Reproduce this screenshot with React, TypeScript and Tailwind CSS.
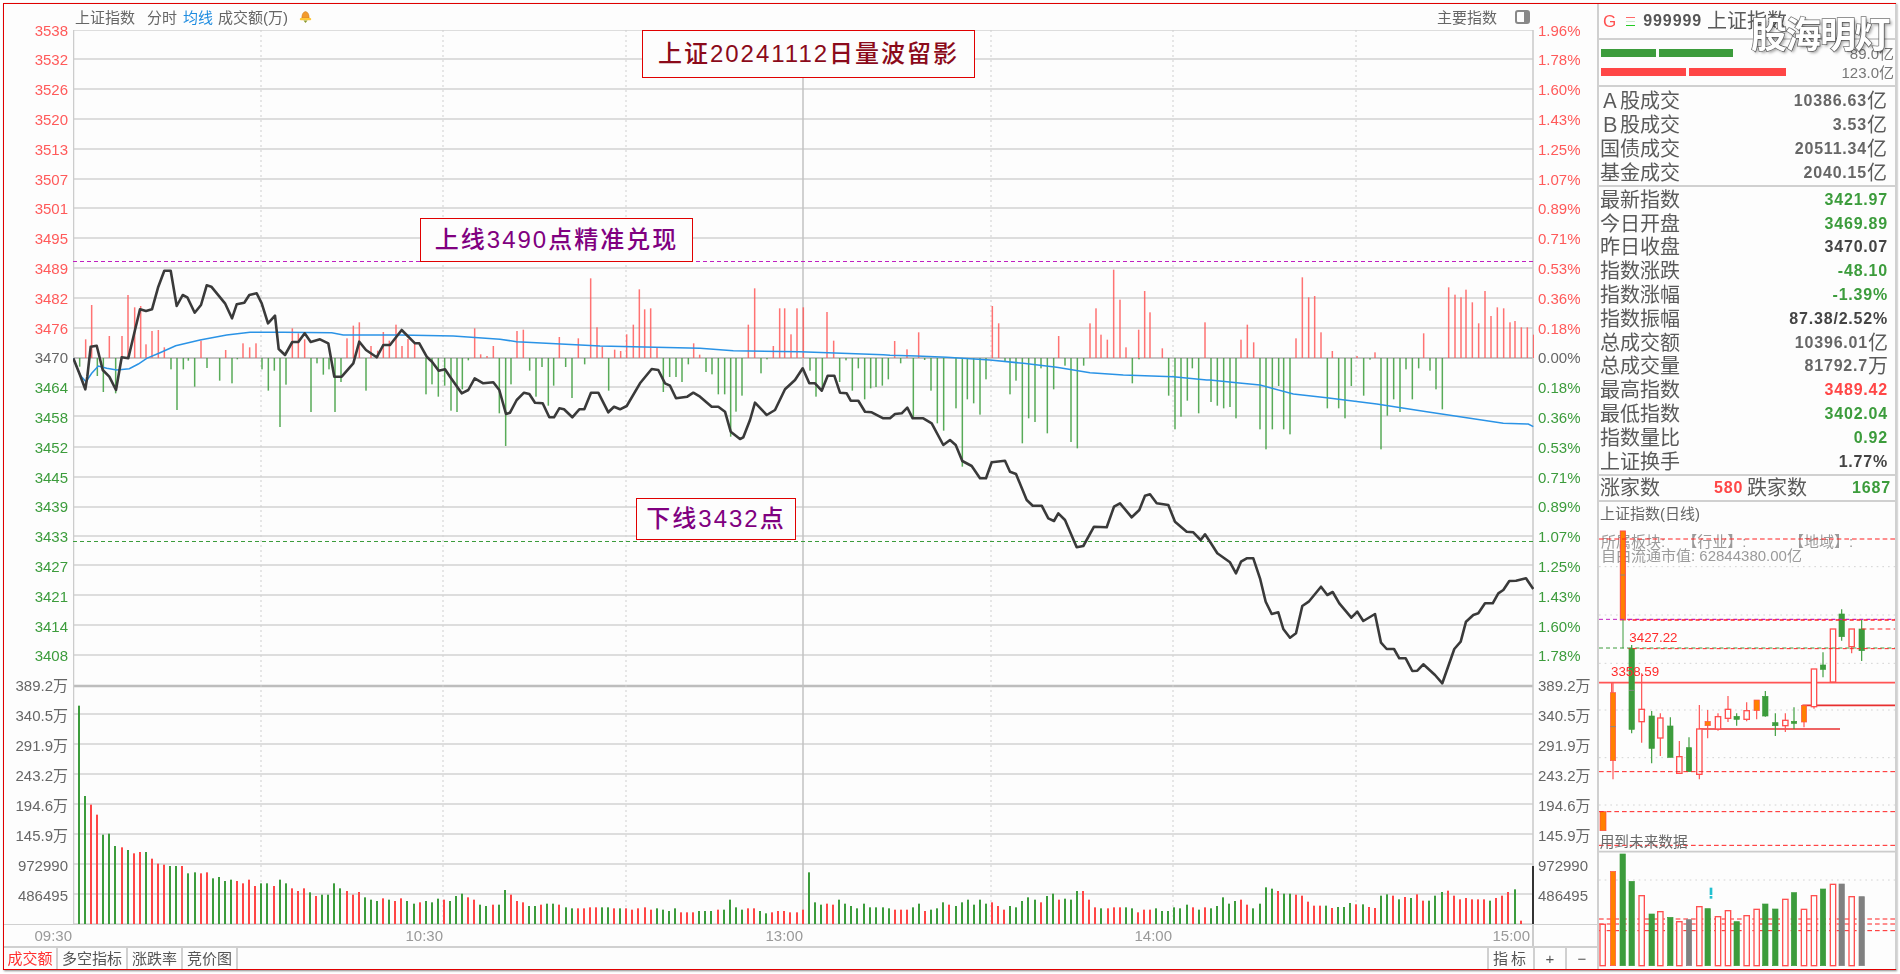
import React from "react";

const GRID = [30,59,89,119,149,179,208,238,268,298,328,358,387,416,447,477,507,536,565,595,625,655,686];
const VGRID = [714,744,774,804,834,864,894,924];
const VERT = [261,443,626,991,1173,1356];
const GREEN = "#3c9c3c";
const RED = "#ff4646";

const LEFT_UP = ["3538","3532","3526","3520","3513","3507","3501","3495","3489","3482","3476"];
const LEFT_DN = ["3464","3458","3452","3445","3439","3433","3427","3421","3414","3408"];
const RIGHT_UP = ["1.96%","1.78%","1.60%","1.43%","1.25%","1.07%","0.89%","0.71%","0.53%","0.36%","0.18%"];
const RIGHT_DN = ["0.18%","0.36%","0.53%","0.71%","0.89%","1.07%","1.25%","1.43%","1.60%","1.78%"];
const VOLS = ["389.2万","340.5万","291.9万","243.2万","194.6万","145.9万","972990","486495"];

type Bar = { x: number; h: number; c: string };
function volSeg(start: number, base: number, s: string, maxX: number): Bar[] {
  return s.trim().split(/\s+/).map((t, k) => ({
    x: start + k * 6.08,
    h: (base - parseInt(t)) / 3,
    c: t.endsWith("g") ? GREEN : RED,
  })).filter((b) => b.x < maxX);
}
const VOL_BARS: Bar[] = [
  ...volSeg(79, 733, "78g 349g 375r 405r 465g 462g 499g 503r 511g 521r 517r 517g 537r 552r 555r 559g 559g 559r 581g 578g 581r 578r 596g 592g 604g 600g 604r 611r 600r 619r 611g 611g 619r 600g 611g 626r 634r 626r 638g 649r 645g 645g 611g 626g 634r 645r 637r 653g 660g 664g 656r 660g 664r 656r 664g", 411),
  ...volSeg(413.5, 192, "131g 127r 123g 127g 116g 119r 123g 108g 101g 112r 119r 134g 138g 134r 134g 90g 104r 123r 127r 138g 138g 134r 131g 131g 134r 142g 145g 145r 145r 142r 142r 142g 142g 145r 145g 145r 149r 145r 142r 149r 145g 149g 153g 145g 157r 157r 157r 153g 153g 153g 149r 149g 119g 142g 149g 145r 145r 153g 160g 157r 153r 153r 157r 157r 149r 37g 127g 134g 131r 134r 119g 131g 138g 145g 131g 142g", 861),
  ...volSeg(864.3, 192, "131g 142g 142g 142g 145g 149r 149r 149r 142g 131g 153r 149g 145g 127g 134r 138g 127g 119g 134g 119g 131g 127r 138r 149r 138g 142g 123g 112g 119g 127r 108g 101g 119r 116g 119g 93g 93r 119r 142r 145g 145r 142r 142r 142g 145g 157r 149r 149r 145g 153g 153g 142g 145g 134g 142r 149g 142r 145g 138g 112g 131g 123g 119r 134r 145g 131g 82g 86g 93r 101g 101g 104r 108r 127r 138r 138r", 1299),
  ...volSeg(1301.7, 253, "168r 186r 198r 198r 198g 205r 202g 202g 190g 194r 194g 202r 205r 168g 164g 168r 179g 172r 175g 164r 183r 183g 168g 157g 153r 168r 179r 175r 179r 179r 179r 183g 175r 168r 157r 149g 243r", 1530),
];

function parsePts(s: string) {
  return s.trim().split(/;\s*/).filter(Boolean).map((p) => p.split(",").map(Number));
}
function tracePts(ox: number, oy: number, s: string, minZ = -1, maxZ = 99999) {
  return parsePts(s).filter(([x]) => x >= minZ && x <= maxZ).map(([x, y]) => `${(ox + x / 3).toFixed(1)},${(oy + y / 3).toFixed(1)}`).join(" ");
}
const PRICE = [
  tracePts(0,0,"220,1075;240,1125;256,1168;262,1130;272,1040;290,1037;308,1110;328,1130;348,1170;365,1072;385,1075;405,990;420,928;438,933;456,928;475,860;493,812;512,812;530,918;548,885;562,892;584,938;603,915;620,856;634,860;675,910;696,955;710,913;733,908;748,885;770,880;785,910;804,970;825,947;836,1047;855,1065;877,1026;895,1026;914,1000;932,1026;960,1018;985,1030;1003,1130;1025,1130;1060,1090;1078,1025;1098,1050;1130,1072;1150,1035;1170,1035;1205,990;1245,1030;1258,1030;1280,1070;1296,1085;1316,1112;1335,1108;1350,1130;1385,1180;1405,1170;1424,1135;1450,1150;1480,1147"),
  tracePts(400,220,"298,510;318,582;330,578;350,540;372,518;388,522;405,548;428,550;448,592;462,592;478,565;492,568;517,592;538,568;553,568;573,518;595,518;625,577;642,560;660,568;680,558;720,490;755,447;775,450;795,490;810,497;828,535;862,530;880,518;900,530;935,560;955,560;975,575;992,635;1020,657;1030,652;1050,600;1065,548;1100,585;1125,570;1155,508;1185,480;1208,445;1228,490;1245,490;1265,512;1283,467;1303,467;1320,518;1340,520;1352,542;1375,542;1395,575;1415,577;1450,595;1470,595"),
  tracePts(890,250,"15,492;35,490;52,473;68,505;100,505;125,520;160,585;180,570;197,585;217,633;245,648;270,685;288,685;305,637;345,632;360,665;378,672;410,750;428,767;455,767;475,805;492,813;505,790;525,810;560,892;580,888;612,830;650,832;672,770;690,760;725,802;748,780;765,737;780,733;800,760;835,765;855,815;890,845;910,847;932,870;945,853"),
  tracePts(1210,250,"0,875;22,910;60,937;78,970;93,935;110,925;130,925;150,985;167,1055;185,1092;205,1087;220,1137;240,1163;258,1150;277,1068;296,1055;333,1010;352,1035;368,1026;388,1060;424,1103;442,1085;460,1113;495,1092;513,1178;530,1197;552,1197;568,1225;587,1225;607,1263;622,1262;640,1243;675,1275;697,1300;733,1197;752,1175;768,1115;790,1095;805,1090;825,1060;848,1060;865,1030;880,1020;898,993;918,992;948,985;970,1017"),
].join(" ");
const AVG = [
  tracePts(0,0,"220,1075;240,1125;258,1145;275,1120;295,1098;320,1105;350,1110;388,1106;415,1092;440,1075;480,1058;527,1037;600,1020;680,1005;750,997;850,997;995,998;1030,1005;1190,1005"),
  tracePts(400,220,"0,345;160,348;300,358;350,365;600,378;900,385;1000,392;1200,395;1450,404"),
  tracePts(890,250,"0,316;80,318;170,322;300,330;400,340;500,352;600,368;700,375;850,380;950,390"),
  tracePts(1210,250,"0,390;80,398;150,405;250,432;350,443;500,462;650,485;750,500;880,520;955,522;970,530"),
].join(" ");

type Diff = { x: number; y: number; h: number; c: string };
function diffs(ox: number, oy: number, base: number, s: string): Diff[] {
  const by = 358;
  return s.trim().split(/\s+/).map((t) => {
    const [zx, zy] = t.split(":").map(Number);
    const yy = oy + zy / 3;
    const up = zy < base;
    return { x: ox + zx / 3, y: up ? yy : by, h: up ? by - yy : yy - by, c: up ? "#ff5a5a" : "#3c9c3c" };
  });
}
const DIFF: Diff[] = [
  ...diffs(0,0,1073,"257:1018 275:915 328:1008 366:1008 384:885 404:922 422:918 438:1033 456:993 475:990 493:1042 603:1022 677:1050 729:1030 749:1042 768:1030 877:985 895:1000 914:1018 1041:1015 1060:977 1078:967 1113:1038 1133:1052 1150:996 1168:1022 1188:974 239:1100 292:1128 310:1176 347:1180 513:1108 531:1230 550:1108 565:1082 584:1160 621:1104 659:1142 696:1150 712:1078 786:1108 805:1172 823:1112 840:1281 858:1154 933:1236 951:1090 970:1124 987:1108 1005:1236 1023:1146 1098:1172"),
  ...diffs(400,220,413,"6:378 24:357 44:372 224:325 242:403 261:408 280:378 351:333 370:329 478:351 535:355 572:175 591:322 607:380 644:389 662:393 680:343 700:314 718:208 734:268 752:265 771:383 881:370 899:404 1045:314 1064:205 1120:378 1139:265 1154:265 1173:343 1191:265 1210:262 1281:276 1301:362 78:523 96:493 115:530 134:497 153:572 171:576 187:508 205:421 298:580 317:678 333:493 389:452 408:530 426:441 445:557 461:497 497:441 516:534 554:433 626:512 790:516 809:471 828:471 846:486 865:433 918:456 936:463 955:523 974:523 992:650 1008:575 1026:527 1083:460 1101:418 1230:452 1248:530 1267:512 1319:486 1338:421 1357:512 1375:445 1394:538 1412:505 1428:501 1447:497 1465:478"),
  ...diffs(890,250,323,"14:273 51:298 86:247 307:168 326:220 506:258 600:220 618:175 633:254 652:269 671:59 690:149 708:292 746:239 764:123 780:187 817:295 945:217 32:340 70:505 104:330 123:422 142:520 161:542 198:475 217:650 232:448 251:460 270:494 288:388 345:333 360:433 378:392 397:580 416:505 435:516 453:355 472:550 491:418 525:347 543:576 562:595 581:347 727:400 747:328 836:437 855:538 873:500 892:452 907:355 926:490"),
  ...diffs(1210,250,323,"93:269 112:224 131:277 258:265 277:82 296:142 314:138 333:247 367:303 441:318 495:307 641:250 716:112 735:134 753:142 768:119 787:157 806:220 825:123 843:198 862:172 881:175 900:217 915:213 934:232 952:232 971:254 3:456 22:467 41:475 60:471 78:505 150:538 168:598 187:538 206:408 221:538 240:553 352:475 386:475 405:505 424:408 461:437 480:329 513:598 532:497 551:448 570:486 588:358 607:448 626:355 660:362 678:418 697:478"),
];

function MainChart() {
  return (
    <svg width="1461" height="894" viewBox="73 30 1461 894" className="block">
      {GRID.map((y, i) => (
        <line key={y} x1={73} x2={1533} y1={y} y2={y} stroke={i === 22 ? "#bdbdbd" : i === 11 ? "#c4c4c4" : "#d2d2d2"} strokeWidth={i === 22 ? 2.5 : i === 11 ? 2 : 1.5} />
      ))}
      {VGRID.map((y) => (
        <line key={y} x1={73} x2={1533} y1={y} y2={y} stroke="#d2d2d2" strokeWidth={1.5} />
      ))}
      {VERT.map((x) => (
        <line key={x} x1={x} x2={x} y1={30} y2={924} stroke="#cfcfcf" strokeWidth={1} strokeDasharray="2 3" />
      ))}
      <line x1={803} x2={803} y1={30} y2={924} stroke="#c2c2c2" strokeWidth={1.5} />
      <line x1={73.5} x2={73.5} y1={30} y2={924} stroke="#cccccc" strokeWidth={1.5} />
      <line x1={1533} x2={1533} y1={30} y2={924} stroke="#c8c8c8" strokeWidth={1.5} />
      <line x1={73} x2={1533} y1={261.5} y2={261.5} stroke="#c020c0" strokeWidth={1} strokeDasharray="4 3" />
      <line x1={73} x2={1533} y1={541.5} y2={541.5} stroke={GREEN} strokeWidth={1} strokeDasharray="4 3" />
      {DIFF.map((b, i) => (
        <rect key={i} x={b.x - 0.75} y={b.y} width={1.5} height={b.h} fill={b.c} opacity={0.85} />
      ))}
      <polyline points={AVG} fill="none" stroke="#2a93e6" strokeWidth={1.5} />
      <polyline points={PRICE} fill="none" stroke="#3a3a3a" strokeWidth={2.6} strokeLinejoin="round" />
      {VOL_BARS.map((b, i) => (
        <rect key={i} x={Math.round(b.x) - 1} y={924 - b.h} width={2} height={b.h} fill={b.c} />
      ))}
      <rect x={1532} y={866} width={2} height={58} fill="#333333" />
    </svg>
  );
}

function AxisLabel({ text, color, align }: { text: string; color: string; align: "l" | "r" }) {
  return (
    <div className={align === "r" ? "h-[29.8px] leading-[29.8px] text-right pr-[5px] text-[15px]" : "h-[29.8px] leading-[29.8px] pl-[4px] text-[15px]"} style={{ color }}>
      {text}
    </div>
  );
}

function VolLabel({ text, align }: { text: string; align: "l" | "r" }) {
  return (
    <div className={align === "r" ? "h-[30px] leading-[30px] text-right pr-[5px] text-[15px] text-[#666666]" : "h-[30px] leading-[30px] pl-[4px] text-[15px] text-[#666666]"}>
      {text}
    </div>
  );
}

function Bell() {
  return (
    <svg width="13" height="13" viewBox="0 0 13 13" className="ml-[11px]">
      <path d="M6.5 0.5 C4 1 3 3 2.8 7 L10.2 7 C10 3 9 1 6.5 0.5Z" fill="#f39a2d" stroke="#c9791a" strokeWidth="0.5" />
      <rect x="0.8" y="7" width="11.4" height="2.2" rx="1" fill="#ffc83a" />
      <path d="M4.5 9.4 L8.5 9.4 L6.5 12Z" fill="#8a9a2a" />
    </svg>
  );
}

type C = [number, number, number, number, number, "o" | "g" | "r"];
const CANDLES: C[] = [
  [64,488,778,518,722,"o"],[120,375,640,385,628,"g"],[150,460,668,568,605,"r"],[180,573,730,588,685,"g"],
  [206,580,708,594,654,"r"],[236,592,712,618,712,"g"],[263,663,760,710,760,"r"],[292,652,755,683,755,"g"],
  [323,555,778,627,763,"r"],[348,570,655,604,617,"o"],[379,580,632,590,627,"r"],[409,528,606,568,595,"r"],
  [435,580,617,589,598,"g"],[465,547,604,572,598,"r"],[495,540,598,540,572,"o"],[521,513,590,529,588,"g"],
  [551,580,648,608,617,"g"],[581,580,636,601,617,"r"],[607,562,627,604,610,"g"],[637,556,622,556,606,"o"],
  [667,447,566,447,560,"r"],[694,397,472,435,448,"g"],[724,327,488,327,486,"r"],[750,268,362,282,350,"g"],
  [780,327,400,327,380,"r"],[810,300,423,327,392,"g"],
];
type VB = [number, number, "o" | "g" | "r" | "x"];
const MINI_VOL: VB[] = [
  [33,1213,"r"],[64,1054,"o"],[93,1002,"g"],[120,1084,"g"],[150,1127,"r"],[180,1182,"g"],[206,1175,"r"],[236,1192,"g"],
  [263,1205,"r"],[292,1199,"x"],[323,1160,"r"],[348,1166,"g"],[379,1190,"r"],[409,1172,"r"],[435,1205,"g"],[465,1187,"r"],
  [495,1168,"r"],[521,1152,"g"],[551,1167,"g"],[581,1138,"r"],[607,1118,"g"],[637,1168,"r"],[667,1127,"r"],[694,1107,"g"],
  [724,1093,"r"],[750,1092,"x"],[780,1130,"r"],[810,1130,"x"],
];

function MiniChart() {
  const dotted = [140,285,430,570,713,855,1080];
  const dashes = [57,755,875,976,1197,1212,1232];
  const cjk = "'Liberation Sans','Noto Sans CJK SC',sans-serif";
  return (
    <svg width="296" height="446" viewBox="22 9 888 1338" className="block" style={{ fontFamily: cjk }}>
      {dotted.map((y) => (
        <line key={y} x1={22} x2={910} y1={y} y2={y} stroke="#d4d4d4" strokeWidth={3} strokeDasharray="5 12" />
      ))}
      <text x={28} y={80} fontSize={45} fill="#9a9a9a">所属板块:</text>
      <text x={272} y={80} fontSize={45} fill="#9a9a9a">【行业】:</text>
      <text x={592} y={80} fontSize={45} fill="#9a9a9a">【地域】:</text>
      <text x={28} y={122} fontSize={45} fill="#9a9a9a">自由流通市值: 62844380.00亿</text>
      <line x1={22} x2={910} y1={488} y2={488} stroke="#ff5555" strokeWidth={5} />
      <line x1={60} x2={60} y1={488} y2={518} stroke="#ff5555" strokeWidth={4} />
      <line x1={632} x2={910} y1={556} y2={556} stroke="#e83030" strokeWidth={5} />
      <line x1={322} x2={745} y1={627} y2={627} stroke="#e83030" strokeWidth={5} />
      <rect x={86} y={33} width={15} height={267} fill="#ff8000" stroke="#ff4646" strokeWidth={3} />
      <line x1={86} x2={100} y1={165} y2={165} stroke="#888888" strokeWidth={3} />
      <line x1={94} x2={94} y1={300} y2={385} stroke={GREEN} strokeWidth={3} />
      <rect x={25} y={875} width={18} height={57} fill="#ff8000" stroke="#ff4646" strokeWidth={2} />
      {CANDLES.map(([x, wt, wb, bt, bb, k]) => (
        <g key={x}>
          <line x1={x} x2={x} y1={wt} y2={wb} stroke={k === "g" ? GREEN : "#ff5050"} strokeWidth={3.5} />
          <rect x={x - 8} y={bt} width={16} height={bb - bt} fill={k === "o" ? "#ff8000" : k === "g" ? GREEN : "#fdfdfd"} stroke={k === "g" ? GREEN : "#ff5050"} strokeWidth={k === "r" ? 4 : 2} />
        </g>
      ))}
      <line x1={56} x2={72} y1={620} y2={620} stroke="#888888" strokeWidth={3} />
      <line x1={112} x2={128} y1={511} y2={511} stroke="#888888" strokeWidth={3} />
      <line x1={22} x2={110} y1={298} y2={298} stroke="#c020c0" strokeWidth={3} strokeDasharray="12 9" />
      <line x1={110} x2={910} y1={298} y2={298} stroke="#c020c0" strokeWidth={4} strokeDasharray="12 9" />
      <line x1={110} x2={910} y1={300} y2={300} stroke="#ff2020" strokeWidth={4} strokeDasharray="12 9" strokeDashoffset={8} />
      <line x1={22} x2={110} y1={384} y2={384} stroke={GREEN} strokeWidth={3} strokeDasharray="12 9" />
      <line x1={110} x2={910} y1={384} y2={384} stroke={GREEN} strokeWidth={3} strokeDasharray="12 9" />
      <line x1={110} x2={910} y1={386} y2={386} stroke="#ff2020" strokeWidth={3} strokeDasharray="12 9" strokeDashoffset={8} />
      <line x1={810} x2={910} y1={327} y2={327} stroke="#ff2020" strokeWidth={3} strokeDasharray="14 10" />
      {dashes.map((y) => (
        <line key={y} x1={22} x2={910} y1={y} y2={y} stroke="#ff2020" strokeWidth={3} strokeDasharray="14 9" />
      ))}
      <text x={113} y={366} fontSize={40} fill="#ff2a2a">3427.22</text>
      <text x={58} y={467} fontSize={40} fill="#ff2a2a">3358.59</text>
      <text x={24} y={982} fontSize={44} fill="#6a6a6a">用到未来数据</text>
      <line x1={22} x2={910} y1={995} y2={995} stroke="#cccccc" strokeWidth={5} />
      {MINI_VOL.map(([x, top, k]) => (
        <rect key={x} x={x - 8} y={top} width={16} height={1337 - top}
          fill={k === "o" ? "#ff8000" : k === "g" ? GREEN : k === "x" ? "#808080" : "#fdfdfd"}
          stroke={k === "g" ? GREEN : k === "x" ? "#808080" : "#ff5050"} strokeWidth={k === "r" ? 4 : 2} />
      ))}
      <rect x={354} y={1103} width={8} height={22} fill="#22c0d0" />
      <rect x={354} y={1128} width={8} height={8} fill="#22c0d0" />
    </svg>
  );
}

function DataRow({ label, value, unit, color, h }: { label: string; value: string; unit?: string; color: string; h: "a" | "b" }) {
  return (
    <div className={h === "a" ? "flex justify-between items-center h-[24px] pl-[1px] pr-[8px]" : "flex justify-between items-center h-[23.8px] pl-[1px] pr-[7px]"}>
      <span className="text-[20px] leading-none text-[#5a5a5a]">{label}</span>
      <span className="flex items-center leading-none">
        <span className="text-[16px] font-bold tracking-[0.8px]" style={{ color }}>{value}</span>
        {unit ? <span className="text-[20px] text-[#5a5a5a]">{unit}</span> : null}
      </span>
    </div>
  );
}

const GRAY = "#666666";
const DARK = "#444444";
const ROWS2: [string, string, string, string?][] = [
  ["最新指数","3421.97",GREEN],["今日开盘","3469.89",GREEN],["昨日收盘","3470.07",DARK],["指数涨跌","-48.10",GREEN],
  ["指数涨幅","-1.39%",GREEN],["指数振幅","87.38/2.52%",DARK],["总成交额","10396.01",GRAY,"亿"],["总成交量","81792.7",GRAY,"万"],
  ["最高指数","3489.42",RED],["最低指数","3402.04",GREEN],["指数量比","0.92",GREEN],["上证换手","1.77%",DARK],
];

function Note({ text, color, cls }: { text: string; color: string; cls: string }) {
  return (
    <div className={`absolute flex items-center justify-center bg-[#fdfdfd] border border-[#e00000] text-[24px] leading-none tracking-[2px] font-medium ${cls}`} style={{ color }}>
      {text}
    </div>
  );
}

export default function App() {
  return (
    <div className="w-[1900px] h-[974px] bg-white pl-[3px] pt-[3px] overflow-hidden font-['Liberation_Sans','Noto_Sans_CJK_SC',sans-serif]">
      <div className="w-[1893px] h-[967px] border border-[#e00000] bg-[#fdfdfd] flex shadow-[1px_1px_2px_#888888] blur-[0.35px]">
        <div className="w-[1593px] flex flex-col shrink-0">
          <div className="h-[920px] flex">
            <div className="w-[69px] pt-[11.7px] shrink-0">
              {LEFT_UP.map((t) => <AxisLabel key={t} text={t} color="#ff5a5a" align="r" />)}
              <AxisLabel text="3470" color="#666666" align="r" />
              {LEFT_DN.map((t) => <AxisLabel key={t} text={t} color={GREEN} align="r" />)}
              {VOLS.map((t) => <VolLabel key={t} text={t} align="r" />)}
            </div>
            <div className="w-[1461px] shrink-0 relative">
              <div className="h-[26px] flex items-center justify-between pl-[2px] pr-[4px] text-[15px] text-[#666666] leading-none">
                <div className="flex items-center">
                  <span>上证指数</span>
                  <span className="ml-[12px]">分时</span>
                  <span className="ml-[6px] text-[#1e8ce0]">均线</span>
                  <span className="ml-[5px]">成交额(万)</span>
                  <Bell />
                </div>
                <div className="flex items-center">
                  <span>主要指数</span>
                  <span className="ml-[18px] w-[15px] h-[14px] rounded-[3px] border-2 border-[#888888] flex justify-end">
                    <span className="w-[4px] bg-[#888888]" />
                  </span>
                </div>
              </div>
              <MainChart />
              <Note text="上证20241112日量波留影" color="#8b0a1a" cls="left-[569px] top-[26px] w-[333px] h-[48px]" />
              <Note text="上线3490点精准兑现" color="#800080" cls="left-[347px] top-[214px] w-[273px] h-[44px]" />
              <Note text="下线3432点" color="#800080" cls="left-[563px] top-[494px] w-[160px] h-[42px]" />
            </div>
            <div className="flex-1 pt-[11.7px]">
              {RIGHT_UP.map((t) => <AxisLabel key={t} text={t} color="#ff5a5a" align="l" />)}
              <AxisLabel text="0.00%" color="#666666" align="l" />
              {RIGHT_DN.map((t, i) => <AxisLabel key={i} text={t} color={GREEN} align="l" />)}
              {VOLS.map((t) => <VolLabel key={t} text={t} align="l" />)}
            </div>
          </div>
          <div className="h-[22px] flex items-center border-t border-[#d0d0d0] text-[15px] text-[#999999] leading-[21px]">
            <span className="w-[68px] text-right">09:30</span>
            <span className="w-[371px] text-right">10:30</span>
            <span className="w-[360px] text-right">13:00</span>
            <span className="w-[369px] text-right">14:00</span>
            <span className="w-[362px] h-full text-right pr-[2px] border-r-2 border-[#cccccc]">15:00</span>
          </div>
          <div className="h-[23px] flex border-t-2 border-[#d0d0d0] text-[15px] text-[#555555] leading-none">
            <div className="w-[54px] flex items-center justify-center border-r-2 border-[#d0d0d0] text-[#ff3030]">成交额</div>
            <div className="w-[70px] flex items-center justify-center border-r-2 border-[#d0d0d0]">多空指标</div>
            <div className="w-[55px] flex items-center justify-center border-r-2 border-[#d0d0d0]">涨跌率</div>
            <div className="w-[55px] flex items-center justify-center border-r-2 border-[#d0d0d0]">竞价图</div>
            <div className="flex-1" />
            <div className="w-[46px] flex items-center justify-center border-l-2 border-[#d0d0d0] tracking-[3px]">指标</div>
            <div className="w-[32px] flex items-center justify-center border-l-2 border-[#d0d0d0]">+</div>
            <div className="w-[32px] flex items-center justify-center border-l-2 border-[#d0d0d0]">−</div>
          </div>
        </div>
        <div className="flex-1 relative flex flex-col border-l-2 border-r-2 border-[#d0d0d0]">
          <div className="h-[36px] flex items-center border-b-2 border-[#d0d0d0] shrink-0 leading-none">
            <span className="ml-[4px] text-[17px] text-[#ff5050]">G</span>
            <span className="ml-[10px] w-[9px] flex flex-col gap-[3px]">
              <span className="h-px bg-[#ff6a6a]" />
              <span className="h-px bg-[#cfe8cf]" />
              <span className="h-px bg-[#22cc22]" />
            </span>
            <span className="ml-[8px] text-[16px] font-bold tracking-[0.9px] text-[#555555]">999999</span>
            <span className="ml-[5px] text-[20px] text-[#5a5a5a]">上证指数</span>
          </div>
          <div className="h-[47px] pt-[3px] border-b-2 border-[#d0d0d0] shrink-0 pl-[2px] pr-[1px] text-[15px] text-[#777777] leading-none">
            <div className="h-[20px] flex items-center justify-between">
              <div className="flex gap-[3px]">
                <span className="w-[55px] h-[8px] bg-[#3c9c3c]" />
                <span className="w-[74px] h-[8px] bg-[#3c9c3c]" />
              </div>
              <span>89.0亿</span>
            </div>
            <div className="h-[18px] flex items-center justify-between">
              <div className="flex gap-[3px]">
                <span className="w-[85px] h-[8px] bg-[#ff4646]" />
                <span className="w-[97px] h-[8px] bg-[#ff4646]" />
              </div>
              <span>123.0亿</span>
            </div>
          </div>
          <div className="pt-[2px] border-b-2 border-[#d0d0d0] shrink-0">
            <DataRow label="Ａ股成交" value="10386.63" unit="亿" color={GRAY} h="a" />
            <DataRow label="Ｂ股成交" value="3.53" unit="亿" color={GRAY} h="a" />
            <DataRow label="国债成交" value="20511.34" unit="亿" color={GRAY} h="a" />
            <DataRow label="基金成交" value="2040.15" unit="亿" color={GRAY} h="a" />
          </div>
          <div className="pt-[1px] border-b-2 border-[#d0d0d0] shrink-0">
            {ROWS2.map(([l, v, c, u]) => <DataRow key={l} label={l} value={v} unit={u} color={c} h="b" />)}
          </div>
          <div className="h-[26px] flex items-center pl-[1px] border-b-2 border-[#d0d0d0] shrink-0 leading-none">
            <span className="text-[20px] text-[#5a5a5a]">涨家数</span>
            <span className="ml-[54px] text-[16px] font-bold tracking-[0.8px] text-[#ff4646]">580</span>
            <span className="ml-[4px] text-[20px] text-[#5a5a5a]">跌家数</span>
            <span className="ml-[45px] text-[16px] font-bold tracking-[0.8px] text-[#3c9c3c]">1687</span>
          </div>
          <div className="h-[21px] pt-[4px] pl-[1px] text-[15px] leading-[16px] text-[#666666] shrink-0">上证指数(日线)</div>
          <MiniChart />
          <div className="absolute right-[6px] top-[12px] h-[40px] flex items-center text-[36px] leading-none tracking-[-1.5px] font-bold text-white [-webkit-text-stroke:1.5px_#777777] [paint-order:stroke_fill] [text-shadow:2px_2px_3px_rgba(0,0,0,0.35)]">
            股海明灯
          </div>
        </div>
      </div>
    </div>
  );
}
